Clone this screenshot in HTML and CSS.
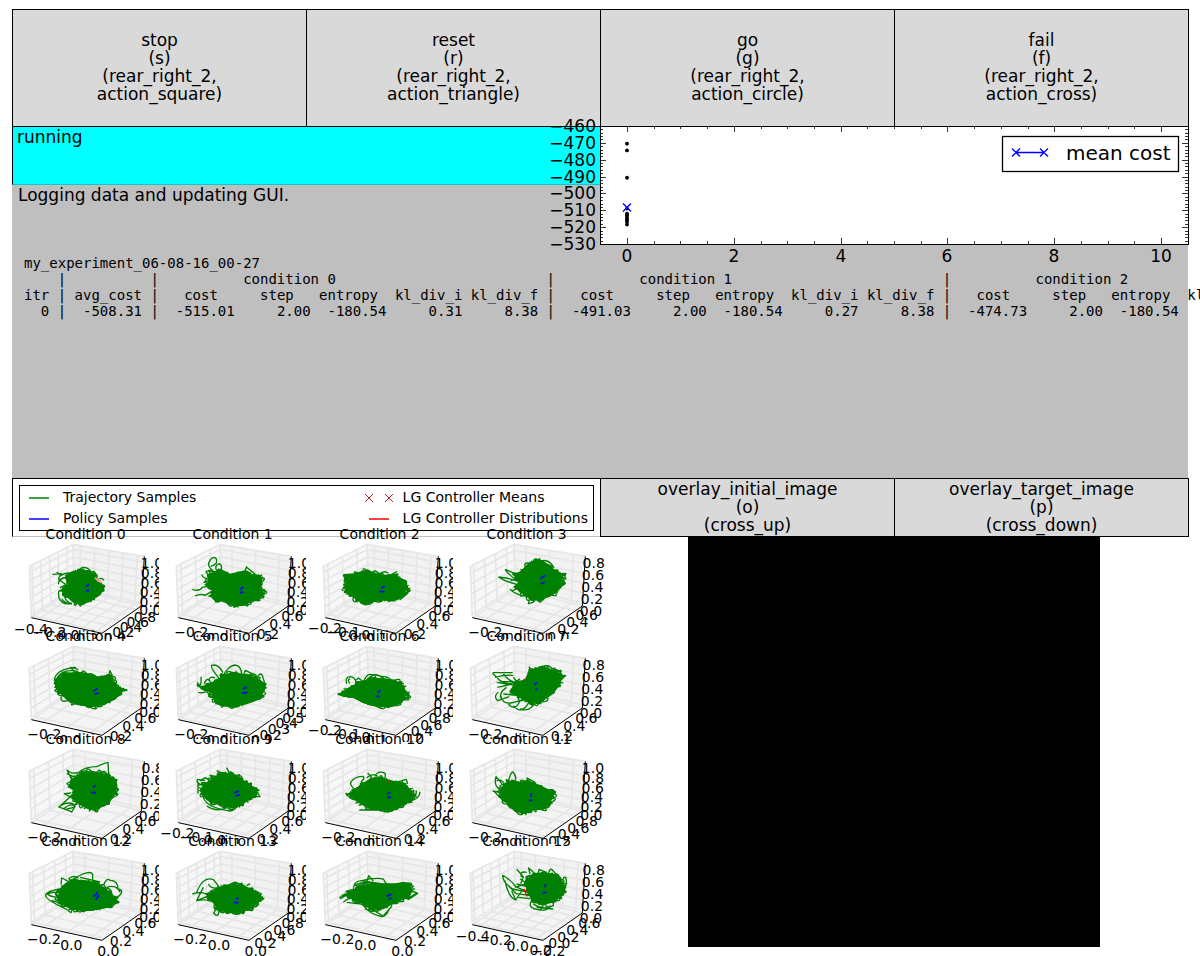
FILE: index.html
```html
<!DOCTYPE html>
<html lang="en">
<head>
<meta charset="utf-8">
<title>Training monitor</title>
<link rel="stylesheet" href="styles.css">
</head>
<body>
<main class="page">
  <div class="actions actions-main">
    <button type="button" class="action">stop<br>(s)<br>(rear_right_2,<br>action_square)</button>
    <button type="button" class="action">reset<br>(r)<br>(rear_right_2,<br>action_triangle)</button>
    <button type="button" class="action">go<br>(g)<br>(rear_right_2,<br>action_circle)</button>
    <button type="button" class="action">fail<br>(f)<br>(rear_right_2,<br>action_cross)</button>
  </div>

  <section class="monitor">
    <div class="monitor-top">
      <div class="messages">
        <p class="status">running</p>
        <p class="log">Logging data and updating GUI.</p>
      </div>
      <svg class="cost-chart" id="cost-chart" viewBox="0 0 588 118" role="img" aria-label="Mean cost per iteration"></svg>
    </div>
    <table class="results">
      <caption>my_experiment_06-08-16_00-27</caption>
      <thead>
        <tr><th>    </th><th>|          </th><th colspan="5">|          condition 0</th><th colspan="5">|          condition 1</th><th colspan="4">|          condition 2</th></tr>
        <tr><th>itr </th><th>| avg_cost </th><th>|   cost  </th><th>   step  </th><th> entropy </th><th> kl_div_i</th><th> kl_div_f </th><th>|   cost  </th><th>   step  </th><th> entropy </th><th> kl_div_i</th><th> kl_div_f </th><th>|   cost  </th><th>   step  </th><th> entropy </th><th> kl_div_i</th></tr>
      </thead>
      <tbody>
        <tr><td>  0 </td><td>|  -508.31 </td><td>|  -515.01</td><td>     2.00</td><td>  -180.54</td><td>     0.31</td><td>     8.38 </td><td>|  -491.03</td><td>     2.00</td><td>  -180.54</td><td>     0.27</td><td>     8.38 </td><td>|  -474.73</td><td>     2.00</td><td>  -180.54</td><td></td></tr>
      </tbody>
    </table>
  </section>

  <div class="overlay-row">
    <div class="legend-panel">
      <ul class="legend">
        <li><svg class="key" viewBox="0 0 34 14"><path class="green" d="M0 7h20"/></svg>Trajectory Samples</li>
        <li><svg class="key" viewBox="0 0 34 14"><path class="cross" d="M-4 3l8 8m0-8l-8 8M16 3l8 8m0-8l-8 8"/></svg>LG Controller Means</li>
        <li><svg class="key" viewBox="0 0 34 14"><path class="blue" d="M0 7h20"/></svg>Policy Samples</li>
        <li><svg class="key" viewBox="0 0 34 14"><path class="red" d="M0 7h20"/></svg>LG Controller Distributions</li>
      </ul>
    </div>
    <div class="actions">
      <button type="button" class="action">overlay_initial_image<br>(o)<br>(cross_up)</button>
      <button type="button" class="action">overlay_target_image<br>(p)<br>(cross_down)</button>
    </div>
  </div>

  <div class="views">
    <div class="plots" id="plots"></div>
    <div class="camera"></div>
  </div>
</main>
<script src="script.js"></script>
</body>
</html>
```
FILE: styles.css
```css
* { box-sizing: border-box; }

body {
  margin: 0;
  background: #fff;
  color: #000;
  font: 17px/18px "DejaVu Sans", sans-serif;
  overflow-x: hidden;
}

.page {
  min-height: 100vh;
  padding: 9px 12px 8px;
}

.actions {
  display: grid;
  grid-auto-flow: column;
  grid-auto-columns: 1fr;
  gap: 1px;
  margin-right: -1px;
  padding: 1px;
  background: #000;
}
.actions-main { min-height: 118px; }
.action {
  border: 0;
  padding: 0 0 2px;
  background: #d9d9d9;
  color: inherit;
  font: inherit;
}

.monitor {
  min-height: 351px;
  background: #bfbfbf;
}
.monitor-top {
  display: grid;
  grid-template-columns: 1fr 1fr;
  align-items: start;
}
.status, .log { margin: 0; }
.status {
  height: 58px;
  padding: 1px 4px;
  background: #0ff;
  border-left: 1px solid #000;
  border-bottom: 1px solid #0cc;
}
.log { padding: 1px 6px; }

svg { overflow: visible; }
.cost-chart {
  display: block;
  width: 100%;
  margin-top: -1px;
}
.frame { fill: #fff; stroke: #000; }
.tick { stroke: #000; fill: none; }
.marker { stroke: #00f; fill: none; }
.axis-text { font-size: 17px; }
.chart-legend-text { font-size: 20px; }
.end { text-anchor: end; }
.middle { text-anchor: middle; }

.results {
  margin: 11px 0 0 12px;
  border-collapse: collapse;
  font: 14px/16px "DejaVu Sans Mono", monospace;
  white-space: pre;
}
.results caption { text-align: left; }
.results th, .results td {
  padding: 0;
  font-weight: normal;
  text-align: left;
}

.overlay-row {
  display: grid;
  grid-template-columns: 1fr 1fr;
  min-height: 59px;
}
.legend-panel {
  padding: 6px 6px 5px;
  border: solid #000;
  border-width: 1px 0 0 1px;
  border-bottom: 1px solid #bfbfbf;
}
.legend {
  display: grid;
  grid-template-columns: auto auto;
  justify-content: space-between;
  align-content: center;
  height: 100%;
  margin: 0;
  padding: 0 5px 0 9px;
  border: 1px solid #000;
  list-style: none;
  font-size: 14px;
  line-height: 21px;
}
.legend li { display: flex; align-items: center; }
.key {
  width: 34px;
  height: 14px;
  fill: none;
  stroke-width: 1.5;
}
.green { stroke: #008000; }
.blue { stroke: #00f; }
.red { stroke: #f00; }
.cross { stroke: #b22222; stroke-width: 1; }

.views {
  display: grid;
  grid-template-columns: 1fr 1fr;
  align-items: start;
}
.plots {
  display: grid;
  grid-template-columns: repeat(4, 1fr);
}
.plot {
  display: block;
  width: 100%;
  background: #fff;
}
.plot text { font-size: 42px; text-anchor: middle; }
.wall { fill: #f7f7f7; }
.back { fill: #f2f2f2; }
.floor { fill: #f4f4f4; }
.grid-line { fill: none; stroke: #e6e6e6; stroke-width: 5; }
.axis-line { fill: none; stroke: #000; stroke-width: 3; }
.core { fill: #008000; stroke: #008000; stroke-width: 4; stroke-linejoin: round; }
.trace { fill: none; stroke: #008000; stroke-width: 4; stroke-linejoin: round; }
.policy { fill: none; stroke: #00f; stroke-width: 5; }
.controller { fill: none; stroke: #f00; stroke-width: 5; }
.controller-faint { fill: none; stroke: #f99; stroke-width: 5; }

.camera {
  width: 70%;
  aspect-ratio: 411 / 410;
  margin-top: -1px;
  justify-self: center;
  background: #000;
}
```
FILE: script.js
```js
const NS = "http://www.w3.org/2000/svg";

function add(parent, name, attrs, text) {
  const node = document.createElementNS(NS, name);
  for (const key in attrs) node.setAttribute(key, attrs[key]);
  if (text !== undefined) node.textContent = text;
  parent.appendChild(node);
  return node;
}

/* Cost chart */
function drawCostChart() {
  const svg = document.getElementById("cost-chart");
  const px = v => 27 + v * 53.4;
  const py = v => (-460 - v) * 118 / 70;
  add(svg, "rect", { class: "frame", x: 0.5, y: 0.5, width: 588, height: 118 });
  let d = "";
  for (let i = 0; i <= 20; i++) {
    const x = Math.round(px(i / 2)) + 0.5, len = i % 4 ? 3 : 6;
    d += `M${x} 0v${len}M${x} 118v${-len}`;
  }
  for (let i = 0; i <= 35; i++) {
    const y = Math.round(py(-460 - i * 2)) + 0.5, len = i % 5 ? 3 : 6;
    d += `M0 ${y}h${len}M588 ${y}h${-len}`;
  }
  add(svg, "path", { class: "tick", d, "stroke-width": 0.8 });
  for (let v = 460; v <= 530; v += 10)
    add(svg, "text", { class: "axis-text end", x: -4, y: Math.round(py(-v)) + 6 }, "\u2212" + v);
  for (let v = 0; v <= 10; v += 2)
    add(svg, "text", { class: "axis-text middle", x: Math.round(px(v)), y: 136 }, v);
  for (const v of [470.5, 474.5, 490.7, 509, 512, 513, 514, 515, 516, 517, 518.5])
    add(svg, "circle", { cx: 27, cy: py(-v), r: 1.9 });
  add(svg, "path", { class: "marker", "stroke-width": 1.4, d: "M23 77.500l8 8m0-8l-8 8" });
  add(svg, "rect", { class: "frame", x: 402.5, y: 10.5, width: 176, height: 35, "stroke-width": 1.3 });
  add(svg, "path", { class: "marker", "stroke-width": 1.3, d: "M416 26.500h28M412 22.500l8 8m0-8l-8 8M440 22.500l8 8m0-8l-8 8" });
  add(svg, "text", { class: "chart-legend-text", x: 466, y: 34 }, "mean cost");
}

/* Small 3D plots: coordinates are in drawing-sheet units, shifted by each plot's origin */
const Z10 = [["1.0", 420, 79], ["0.8", 420, 108], ["0.6", 419, 138], ["0.4", 417, 166], ["0.2", 416, 194], ["0.0", 415, 220]];
const Z08 = [["0.8", 422, 79], ["0.6", 420, 115], ["0.4", 418, 151], ["0.2", 417, 187], ["0.0", 414, 222]];
const XA = [["-0.2", 97, 284], ["0.0", 175, 302]];
const XB = [["-0.2", 57, 274], ["-0.1", 112, 284], ["0.0", 160, 294], ["0.1", 212, 303]];
const YA = [["0.6", 400, 238], ["0.4", 364, 262], ["0.2", 327, 290]];
const YB = [["0.8", 401, 238], ["0.6", 376, 257], ["0.4", 348, 277], ["0.2", 319, 296]];

const plots = [
  { o: [36, 48], z: Z10,
    x: [["-0.4", 57, 276], ["-0.2", 112, 284], ["0.0", 169, 294], ["0.2", 226, 302]],
    y: [["0.8", 399, 239], ["0.6", 377, 254], ["0.4", 357, 270], ["0.2", 334, 286], ["0.0", 309, 304]],
    core: "205,160 235,150 265,150 285,165 297,185 312,197 300,220 270,240 240,250 220,243 200,225 188,205 210,190 200,175",
    loops: "M157 160l28-2q-18 20 0 22M170 153l12 10M185 210q-14-6-8 20q8 22 36 18M175 190q0-20 30-22M185 235q20 20 30 10M235 150q10-16 28-8q14 10 12 20M180 200l20-10M290 178q14-12 22 0M180 165q20-14 40-6M182 180l30 20M190 215q6 30 26 34",
    blue: "M259 196l8-6M258 209h9", faint: "M285 170l12 12M297 172l6 14" },
  { o: [477, 48], z: Z10, x: XA, y: YA,
    core: "625,160 660,150 690,160 735,150 765,165 785,175 778,205 790,208 782,230 760,235 735,252 700,254 670,240 645,238 632,225 640,205 625,190",
    loops: "M640 150q-20-15-12-28q8-18 20-10q8 18-16 24M650 150q-8-18 8-22q14 10 0 22M577 205q20 8 30-6l24-4M585 225q18-8 30-2l30-18M605 160q5 16 28 12M610 185l25-10M735 150q6-16 4-12l25 20q6 12-4 20M760 160l24 8",
    blue: "M720 205l10-7M720 214h10" },
  { o: [18, 48], z: Z10, x: XB, y: YA,
    core: "132,165 165,158 200,148 235,160 265,165 290,165 315,180 322,200 305,228 265,238 235,235 215,245 190,248 165,230 135,210 145,190",
    loops: "M133 180q0-20 35-18M190 155q10-12 20-4M235 160q20-14 30-3M275 160l16-8M322 188l-20 10M332 208l-30 20M325 215l-26 22M262 240q30 0 45-15M135 215l12-12",
    blue: "M244 202l10-7M238 212h15" },
  { o: [459, 48], z: Z08, x: XA,
    y: [["0.6", 401, 234], ["0.4", 373, 255], ["0.2", 346, 277], ["0.0", 316, 299]],
    core: "665,150 690,125 715,115 735,125 760,145 788,160 785,185 775,208 750,225 720,235 690,232 665,215 650,200 660,180 645,165",
    loops: "M595 168q50 4 80 24M595 168q30 20 85 28M617 145q30 18 55 12M615 145q20 30 60 40M632 180l40-20M630 205q20 20 60 22M635 210l40-15M690 230l-5 18l15-4l0-12M700 120q8-12 15-2M720 122q24-12 42 18M750 210q20 0 26-5",
    blue: "M721 173l14-10M722 189l12-5" },
  { o: [36, 355], z: Z10, x: XA, y: YA,
    core: "168,485 195,460 230,455 265,460 300,472 325,462 337,480 355,500 370,508 345,535 315,550 275,558 235,552 205,540 180,515",
    loops: "M163 480q2-35 65-40M165 490q10-50 70-38M162 480q30 0 40-20M175 510q-20-30 10-48M225 455l-14-15l24 6M325 470l5-20l6 14l-2 14M350 500l18 4M170 500q-10-30 25-30",
    blue: "M280 512l13-9M284 521l12-5" },
  { o: [477, 355], z: Z10, x: XA,
    y: [["0.5", 403, 237], ["0.4", 383, 253], ["0.3", 360, 270], ["0.2", 335, 287], ["0.1", 310, 303]],
    core: "650,480 670,465 700,455 730,462 765,470 795,490 785,525 765,540 735,550 700,556 665,556 645,543 635,515 610,505 625,490",
    loops: "M655 470q-25-30-20-36q20-6 34 22M670 465q15-30 35-32q20 2 20 30M605 500q-20-5-10-10q10 12 8-22M592 485q10 25 50 15M595 515q20 6 45-15M612 490q10-25 20-5M625 480q4-15 20-8M770 475q14-30 20 0q8 16-5 32M730 465l6-16l25 12",
    blue: "M729 505l11-6M726 517l16-2" },
  { o: [18, 355], z: Z10, x: XB, y: YB,
    core: "145,505 180,485 215,475 250,475 285,480 310,495 318,520 305,545 265,560 225,555 190,545 160,530 115,522 140,512",
    loops: "M140 490q-6-20 10-22q14 0 20 20M150 488q-10-8 0-14M190 485q10-30 28-22q20-4 38 16M205 475q10-18 40-8q20 0 30 12M290 485l22 4M310 515l18 0l-12 10l12 2M165 480l10-8q12 10 18 12",
    blue: "M232 516l10-7M229 527h9" },
  { o: [459, 355], z: Z08, x: XA, y: YA,
    core: "680,475 690,450 725,440 765,450 785,465 780,490 760,515 735,535 710,548 680,540 650,525 630,512 645,490",
    loops: "M578 456h60M578 458l25 25l35 0M585 470q40-10 55-5M590 485l50 8M592 500l45-10M595 515q-16 12-2 25l35-12M600 525q10 30 40 20l45-10M610 520l40 4M625 550q20 24 35-10M640 555q25 30 48-12M660 565q32 10 45-20M690 455l-2-18M725 440l4-6M760 450q20-10 10 14q24-10 16 10M600 480q30 20 60-6M610 460q30 40 70 20M620 500q-30 20-10 40M640 470q20 30 40 8",
    blue: "M703 492l8-7M706 506h7", red: "M670 477h4" },
  { o: [36, 33], z: Z08, x: XA, y: YA,
    core: "220,145 245,125 280,122 310,130 335,140 350,165 345,190 325,215 295,232 270,235 240,220 215,200 225,180 208,165",
    loops: "M215 145l-14-28l8 6q10 6 20 2M200 128l24 10M235 125q20-18 55-18q30-14 34-12l2 36M215 200l-22-12l20-2M218 190q-30 30-42 38l38 14M180 225q20-15 42-5q10 10-22 14M190 235q20-20 36-10l-12 20",
    blue: "M279 169l8-5M274 185h14" },
  { o: [477, 33], z: Z10,
    x: [["-0.2", 55, 274], ["-0.1", 113, 285], ["0.0", 168, 295], ["0.1", 215, 303]], y: YA,
    core: "610,160 640,145 665,125 690,128 720,140 740,160 765,172 770,190 745,205 725,222 700,230 665,222 630,212 605,190",
    loops: "M612 165q-28-10-18-20l22 4M594 188l0-35M600 150l15-10l14 8M650 118l20 14M680 110l10 20M640 145l-10-12l24 4M700 135l20-4M765 175l15 22l-30 0M610 200q10 30 80 40q14 0 20-14M620 225q30 20 60 5M740 160l16-4",
    blue: "M703 186l13-6M707 195l12-4" },
  { o: [18, 33], z: Z10, x: XA, y: YA,
    core: "150,185 180,165 210,145 240,140 275,150 310,158 335,180 335,205 310,220 280,235 240,235 200,228 170,210",
    loops: "M165 175q-20-15-10-25q12-14 34-14q8 4-6 18M137 185q10 25 24-10M140 188l30 10M178 237h60M200 140q20-15 32-5M225 135q10-18 30-8q4 16-10 24M285 155l34-10l4 14M335 190q10-10 5-14M340 200q12-10 8-22M330 210q30-8 30-28M215 140l-12-14",
    blue: "M262 188l9-5M262 199h10", red: "M264 152h5" },
  { o: [459, 33], z: Z10, x: XA, y: YB,
    core: "605,170 625,150 655,158 680,150 710,160 740,175 760,182 750,215 730,235 700,235 675,247 645,240 620,215 600,195",
    loops: "M600 175q-20-10-12-38l20 24M578 180l26 5M590 150q12-10 24 10M625 155q5-30 14-32q14 16 4 30M595 195l20 14M680 155l2-14l24 14M740 175l24 10l-12 6M610 210q-18-20-26-26l40-14M740 215l-18 20",
    blue: "M692 197l3-10M687 208h10" },
  { o: [36, 340], z: Z10, x: [["-0.2", 96, 284], ["0.0", 178, 302]],
    y: [...YA, ["0.0", 289, 320]],
    core: "180,475 210,450 245,450 275,455 310,470 335,490 350,510 330,528 295,535 255,540 215,535 185,520 175,500",
    loops: "M180 475q-45 8-43 20q0 12 70 44M150 485q-20 10 30 16M140 490q30-10 48-2M155 510l40 10M183 462l2-20l20 10M205 445q14-14 30-2M220 445q50-30 58-14l0 22M240 440l60 14M310 465q10-26 20-16q24 0 24 26q20 4 4 20l-20 14M320 470q30-10 40 15M205 540l8 6l4-10",
    blue: "M280 498l11-8l1-8M287 507l10-13" },
  { o: [477, 340], z: Z10, x: [["-0.2", 94, 285], ["0.0", 180, 302]],
    y: [...YB, ["0.0", 290, 320]],
    core: "630,490 660,470 690,462 725,465 760,478 782,495 775,515 750,535 715,545 680,545 655,535 640,515 625,505",
    loops: "M577 490q25-8 40 0l25-8M590 485q20-50 50-38q12 12 18 24M610 470q-15 30-20 40l45-18M590 510q24-6 50 2M625 460q10 18 35 10M740 465l10-6M765 480l20 10l-14 8M655 520l-14 28q14 14 16-5M690 460l15-6l20 8",
    blue: "M708 506l7-6M702 516h14" },
  { o: [18, 340], z: Z10, x: [["-0.2", 94, 284], ["0.0", 178, 302]],
    y: [...YA, ["0.0", 289, 320]],
    core: "155,480 190,465 225,462 260,460 290,460 325,458 335,480 325,500 290,512 265,525 240,535 200,525 170,508 140,495",
    loops: "M160 480q0-30 25-30q40-10 65-5l12 20M165 465q20-14 65-8M118 500l40-10M120 505q30-20 40-15M130 515q20-20 50-12M140 515l50 6M200 455l6-20l14 16M335 480l18 8l-30 20M330 500l22-14M190 525q20 24 45 30q20 10 32-18M205 530l45 26l26-30M230 545l28-24M165 510q30 20 60 25M195 535q30 10 70-8M210 545l50-20M170 460l80 0M180 450l60 8",
    blue: "M260 497l14-6M266 506l9-4" },
  { o: [459, 340], z: Z08,
    x: [["-0.4", 59, 275], ["-0.2", 126, 288], ["0.0", 194, 305], ["0.2", 263, 318]],
    y: [["0.6", 409, 238], ["0.4", 373, 258], ["0.2", 346, 278], ["0.0", 319, 297], ["-0.2", 286, 320]],
    core: "680,450 700,428 730,430 760,432 785,450 795,480 780,500 755,515 720,520 695,505 680,480",
    loops: "M607 433q30 18 40 35l45 20M608 435q0 20 30 40l50 10M615 450q10 50 32 58M625 465l24 24l45 6M635 480l12 28l20-30M645 470l50-16M650 415l20 24l-8 20M665 440q-8-20 15-15M690 430l-4-18l20 18M715 430l2-14l24 10M745 430q5-20 12-12l18 20M790 445q0-8 8-4l2 20M695 510q-12 20 10 25q40 10 44-10M700 520q30 20 60 5l0-14M710 530l50 5M720 540l12-20l18 14M650 460l40 10M660 445l30 20M655 500l35 4",
    blue: "M734 470l3-10M727 486h12", red: "M671 475l4 6l5 2M679 493l4 3" }
];

/* Reproducible pseudo-random sequence */
function randomFrom(seed) {
  let s = seed;
  return () => (s = (s * 16807) % 2147483647) / 2147483647;
}

/* Smooth strokes that wander along the rim of the trajectory cloud */
function rimTraces(points, random) {
  const n = points.length;
  const cx = points.reduce((a, p) => a + p[0], 0) / n;
  const cy = points.reduce((a, p) => a + p[1], 0) / n;
  const at = (t, f) => {
    const i = Math.floor(t), u = t - i;
    const a = points[i % n], b = points[(i + 1) % n];
    const x = a[0] + (b[0] - a[0]) * u, y = a[1] + (b[1] - a[1]) * u;
    return (cx + (x - cx) * f).toFixed(1) + " " + (cy + (y - cy) * f).toFixed(1);
  };
  let d = "";
  for (let k = 0; k < 45; k++) {
    const t = random() * n;
    d += `M${at(t, 0.85)}Q${at(t + 0.2, 1.05 + random() * 0.4)} ${at(t + 0.3 + random() * 0.7, 0.9 + random() * 0.12)}`;
  }
  for (let k = 0; k < 25; k++) {
    const t = random() * n;
    d += `M${at(t, 0.8)}L${at(t + random() * 0.3, 1.02 + random() * 0.12)}`;
  }
  return d;
}

function mix(a, b, t) {
  return (a[0] + (b[0] - a[0]) * t) + " " + (a[1] + (b[1] - a[1]) * t);
}

function drawBox(svg, xCount, yCount, zCount) {
  const LT = [52, 88], LB = [58, 242], BT = [183, 22], BB = [187, 156];
  const RT = [397, 58], RB = [388, 207], F = [270, 289];
  add(svg, "path", { class: "wall", d: `M${LT}L${BT}L${BB}L${LB}Z` });
  add(svg, "path", { class: "back", d: `M${BT}L${RT}L${RB}L${BB}Z` });
  add(svg, "path", { class: "floor", d: `M${LB}L${BB}L${RB}L${F}Z` });
  let d = `M${LB}L${LT}L${BT}L${RT}M${BT}L${BB}M${LB}L${BB}L${RB}`;
  for (let i = 0; i < zCount; i++) {
    const t = (i + 0.3) / zCount;
    d += `M${mix(LB, LT, t)}L${mix(BB, BT, t)}L${mix(RB, RT, t)}`;
  }
  for (let i = 0; i < xCount; i++) {
    const t = (i + 0.5) / xCount;
    d += `M${mix(BT, RT, t)}L${mix(BB, RB, t)}L${mix(LB, F, t)}`;
  }
  for (let i = 0; i < yCount; i++) {
    const t = (i + 0.3) / yCount;
    d += `M${mix(LT, BT, t)}L${mix(LB, BB, t)}L${mix(F, RB, t)}`;
  }
  add(svg, "path", { class: "grid-line", d });
  add(svg, "path", { class: "axis-line", d: `M${LB}L${F}L${RB}L${RT}` });
}

function drawPlots() {
  const host = document.getElementById("plots");
  plots.forEach((plot, index) => {
    const svg = add(host, "svg", { class: "plot", viewBox: "0 0 441 307" });
    drawBox(svg, plot.x.length > 2 ? 5 : 3, plot.y.length, plot.z.length);
    const g = add(svg, "g", { transform: `translate(${-plot.o[0]} ${-plot.o[1]})` });
    const points = plot.core.split(" ").map(p => p.split(",").map(Number));
    add(g, "polygon", { class: "core", points: plot.core });
    add(g, "path", { class: "trace", d: plot.loops + rimTraces(points, randomFrom(index * 977 + 41)) });
    if (plot.faint) add(g, "path", { class: "controller-faint", d: plot.faint });
    add(g, "path", { class: "policy", d: plot.blue });
    if (plot.red) add(g, "path", { class: "controller", d: plot.red });
    for (const [label, x, y] of [...plot.x, ...plot.y, ...plot.z])
      add(svg, "text", { x, y: y + 15 }, label.replace("-", "\u2212"));
    add(svg, "text", { x: 221, y: 7 }, "Condition " + index);
  });
}

drawCostChart();
drawPlots();
```
